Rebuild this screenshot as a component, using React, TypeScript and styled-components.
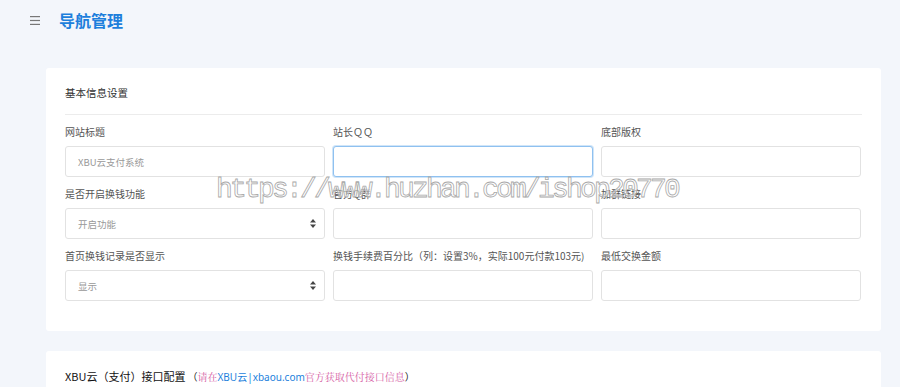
import React from "react";
import styled, { createGlobalStyle } from "styled-components";

const Global = createGlobalStyle`
  html, body { margin: 0; padding: 0; background: #f3f6fb; }
  body { font-family: "Noto Sans CJK SC", "Noto Sans", sans-serif; }
  * { box-sizing: border-box; }
`;

const Page = styled.div`
  position: relative;
  width: 900px;
  height: 387px;
  overflow: hidden;
  background: #f3f6fb;
`;

const TopBar = styled.div`
  display: flex;
  align-items: center;
  height: 40px;
  padding: 0 0 0 30px;
`;

const MenuIcon = styled.svg`
  flex: 0 0 10px;
  width: 10px;
  height: 9px;
  display: block;
`;

const PageTitle = styled.div`
  margin: 0 0 0 19px;
  font-size: 16px;
  line-height: 20px;
  font-weight: 700;
  color: #1d7fdc;
`;

const Content = styled.div`
  display: flex;
  flex-direction: column;
  gap: 20px;
  padding: 28px 19px 0 46px;
`;

const Card = styled.section`
  background: #fff;
  border-radius: 3px;
  padding: 0 19px 30px 19px;
`;

const CardHeader = styled.div<{ $divider?: boolean }>`
  padding: 18px 0 14px;
  font-size: 10.5px;
  line-height: 14px;
  color: #333;
  border-bottom: ${(p) => (p.$divider ? "1px solid #ececec" : "none")};
`;

const FormGrid = styled.div`
  display: grid;
  grid-template-columns: repeat(3, 260px);
  column-gap: 8px;
  row-gap: 10px;
  padding-top: 10px;
`;

const Field = styled.div`
  display: flex;
  flex-direction: column;
  gap: 7px;
`;

const Label = styled.label`
  font-size: 10px;
  line-height: 14px;
  color: #555;
  white-space: nowrap;
`;

const Input = styled.div<{ $focused?: boolean }>`
  height: 31px;
  border-radius: 3px;
  border: 1px solid ${(p) => (p.$focused ? "#8fc1f0" : "#e2e2e2")};
  box-shadow: ${(p) => (p.$focused ? "0 0 0 1px rgba(120,180,235,0.35)" : "none")};
  display: flex;
  align-items: center;
  justify-content: space-between;
  padding: 0 8px 0 12px;
  font-size: 9.5px;
  color: #999;
  background: #fff;
`;

const Arrows = styled.svg`
  width: 6px;
  height: 9px;
  display: block;
`;

const Note = styled.span`
  font-size: 10px;
  margin-left: 2px;
  color: #222;
`;

const Pink = styled.span`
  color: #d661a6;
  font-family: "Noto Serif CJK SC", "Noto Sans CJK SC", serif;
`;

const Blue = styled.span`
  color: #1d7fdc;
  font-family: "Noto Sans", "Noto Sans CJK SC", sans-serif;
`;

const Card2Title = styled(CardHeader)`
  font-size: 11px;
  color: #111;
  padding-bottom: 40px;
`;

const Watermark = styled.div`
  position: absolute;
  left: 216px;
  top: 174px;
  font-family: "Liberation Mono", monospace;
  font-size: 28px;
  letter-spacing: -2.8px;
  color: rgba(255, 255, 255, 0.55);
  -webkit-text-stroke: 0.8px #a9a9a9;
  white-space: nowrap;
  pointer-events: none;
`;

const fields: { label: string; value?: string; select?: boolean; focused?: boolean }[] = [
  { label: "网站标题", value: "XBU云支付系统" },
  { label: "站长ＱＱ", focused: true },
  { label: "底部版权" },
  { label: "是否开启换钱功能", value: "开启功能", select: true },
  { label: "官方Q群" },
  { label: "加群链接" },
  { label: "首页换钱记录是否显示", value: "显示", select: true },
  { label: "换钱手续费百分比（列：设置3%，实际100元付款103元)" },
  { label: "最低交换金额" },
];

export default function App() {
  return (
    <Page>
      <Global />
      <TopBar>
        <MenuIcon viewBox="0 0 10 9">
          <rect x="0" y="0" width="10" height="1.2" fill="#777" />
          <rect x="0" y="3.9" width="10" height="1.2" fill="#777" />
          <rect x="0" y="7.8" width="10" height="1.2" fill="#777" />
        </MenuIcon>
        <PageTitle>导航管理</PageTitle>
      </TopBar>
      <Content>
        <Card>
          <CardHeader $divider>基本信息设置</CardHeader>
          <FormGrid>
            {fields.map((f) => (
              <Field key={f.label}>
                <Label>{f.label}</Label>
                <Input $focused={f.focused}>
                  <span>{f.value}</span>
                  {f.select && (
                    <Arrows viewBox="0 0 6 9">
                      <path d="M3 0 L6 3.5 L0 3.5 Z" fill="#444" />
                      <path d="M3 9 L6 5.5 L0 5.5 Z" fill="#444" />
                    </Arrows>
                  )}
                </Input>
              </Field>
            ))}
          </FormGrid>
        </Card>
        <Card>
          <Card2Title>
            XBU云（支付）接口配置
            <Note>
              （<Pink>请在</Pink>
              <Blue>XBU云|xbaou.com</Blue>
              <Pink>官方获取代付接口信息</Pink>）
            </Note>
          </Card2Title>
        </Card>
      </Content>
      <Watermark>https://www.huzhan.com/ishop20770</Watermark>
    </Page>
  );
}
